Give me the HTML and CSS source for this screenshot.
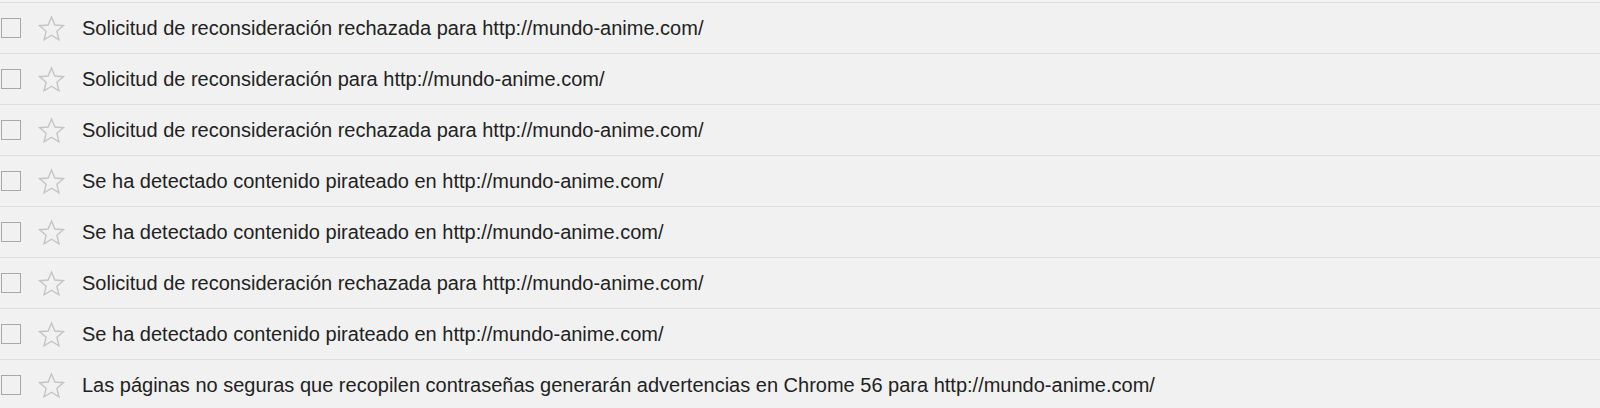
FILE: index.html
```html
<!DOCTYPE html>
<html>
<head>
<meta charset="utf-8">
<link rel="stylesheet" href="styles.css">
</head>
<body>
<div class="list">
  <div class="row"><span class="cb"></span><svg class="star" viewBox="0 0 24 24"><path d="M12 1.8l3 7.1 7.6.6-5.8 5 1.8 7.5L12 18l-6.6 4 1.8-7.5-5.8-5 7.6-.6z"/></svg><span class="subj">Solicitud de reconsideración rechazada para http://mundo-anime.com/</span></div>
  <div class="row"><span class="cb"></span><svg class="star" viewBox="0 0 24 24"><path d="M12 1.8l3 7.1 7.6.6-5.8 5 1.8 7.5L12 18l-6.6 4 1.8-7.5-5.8-5 7.6-.6z"/></svg><span class="subj">Solicitud de reconsideración para http://mundo-anime.com/</span></div>
  <div class="row"><span class="cb"></span><svg class="star" viewBox="0 0 24 24"><path d="M12 1.8l3 7.1 7.6.6-5.8 5 1.8 7.5L12 18l-6.6 4 1.8-7.5-5.8-5 7.6-.6z"/></svg><span class="subj">Solicitud de reconsideración rechazada para http://mundo-anime.com/</span></div>
  <div class="row"><span class="cb"></span><svg class="star" viewBox="0 0 24 24"><path d="M12 1.8l3 7.1 7.6.6-5.8 5 1.8 7.5L12 18l-6.6 4 1.8-7.5-5.8-5 7.6-.6z"/></svg><span class="subj">Se ha detectado contenido pirateado en http://mundo-anime.com/</span></div>
  <div class="row"><span class="cb"></span><svg class="star" viewBox="0 0 24 24"><path d="M12 1.8l3 7.1 7.6.6-5.8 5 1.8 7.5L12 18l-6.6 4 1.8-7.5-5.8-5 7.6-.6z"/></svg><span class="subj">Se ha detectado contenido pirateado en http://mundo-anime.com/</span></div>
  <div class="row"><span class="cb"></span><svg class="star" viewBox="0 0 24 24"><path d="M12 1.8l3 7.1 7.6.6-5.8 5 1.8 7.5L12 18l-6.6 4 1.8-7.5-5.8-5 7.6-.6z"/></svg><span class="subj">Solicitud de reconsideración rechazada para http://mundo-anime.com/</span></div>
  <div class="row"><span class="cb"></span><svg class="star" viewBox="0 0 24 24"><path d="M12 1.8l3 7.1 7.6.6-5.8 5 1.8 7.5L12 18l-6.6 4 1.8-7.5-5.8-5 7.6-.6z"/></svg><span class="subj">Se ha detectado contenido pirateado en http://mundo-anime.com/</span></div>
  <div class="row"><span class="cb"></span><svg class="star" viewBox="0 0 24 24"><path d="M12 1.8l3 7.1 7.6.6-5.8 5 1.8 7.5L12 18l-6.6 4 1.8-7.5-5.8-5 7.6-.6z"/></svg><span class="subj">Las páginas no seguras que recopilen contraseñas generarán advertencias en Chrome 56 para http://mundo-anime.com/</span></div>
</div>
</body>
</html>
```
FILE: styles.css
```css
html, body {
  margin: 0;
  padding: 0;
  background: #f2f2f2;
  overflow: hidden;
}
.list {
  padding-top: 2px;
  font-family: "Liberation Sans", Arial, sans-serif;
}
.row {
  display: flex;
  align-items: center;
  height: 50px;
  border-top: 1px solid #dedede;
  background: #f1f1f1;
}
.cb {
  box-sizing: border-box;
  width: 20px;
  height: 20px;
  border: 1.5px solid #a8a8a8;
  margin-left: 1px;
  flex: none;
}
.star {
  width: 27px;
  height: 27px;
  margin-left: 17px;
  flex: none;
  fill: none;
  stroke: #c4c4c4;
  stroke-width: 1.25;
  stroke-linejoin: miter;
}
.subj {
  margin-left: 17px;
  font-size: 20px;
  color: #222;
  white-space: nowrap;
}
```
